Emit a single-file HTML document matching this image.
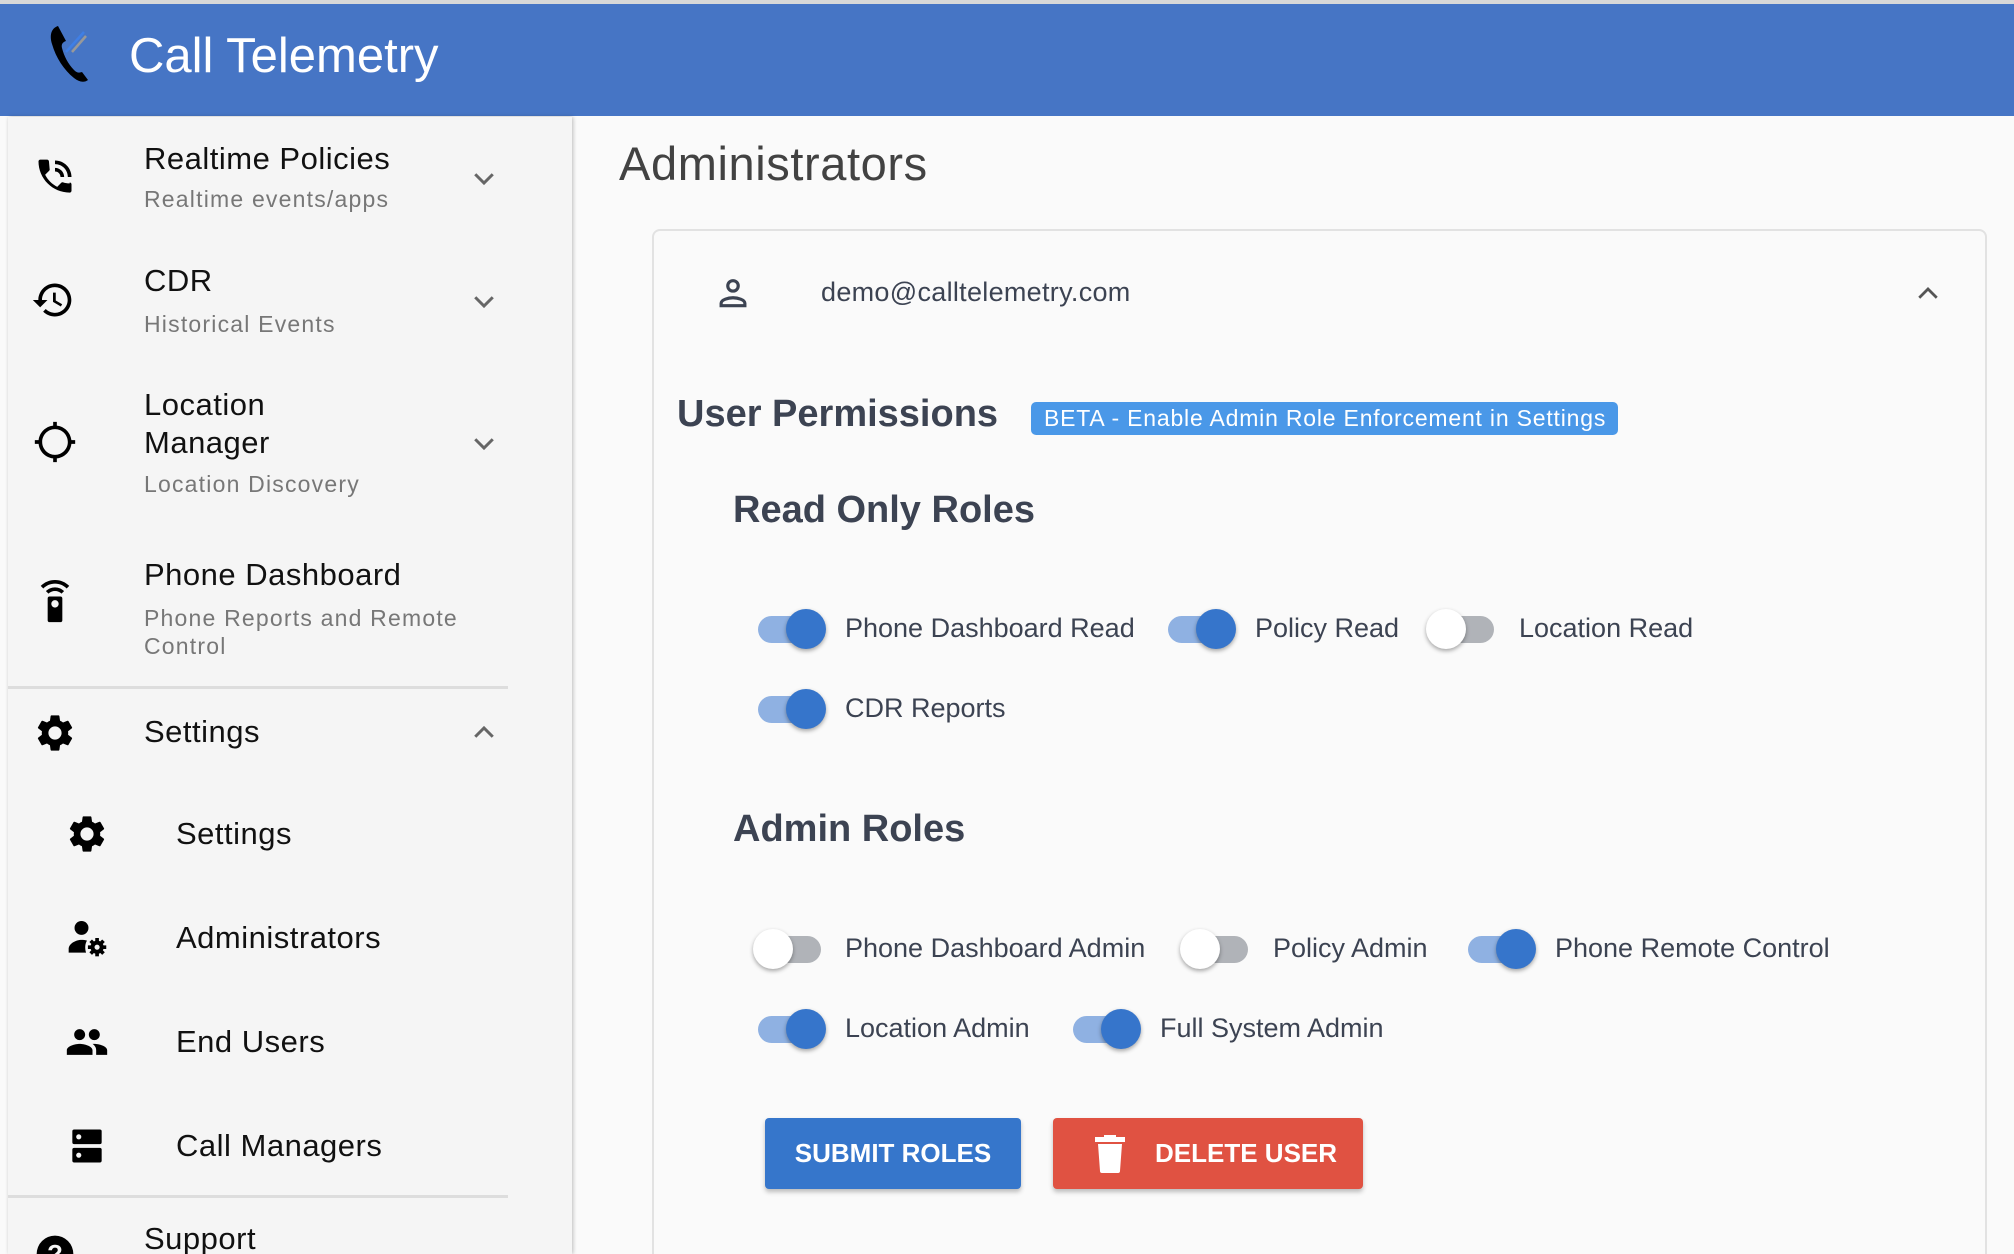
<!DOCTYPE html>
<html style="width:2014px;height:1254px;overflow:hidden"><head><meta charset="utf-8">
<style>
*{margin:0;padding:0;box-sizing:border-box}
body{width:2014px;height:1254px;overflow:hidden;background:#fafafa;font-family:"Liberation Sans",Arial,sans-serif;position:relative}
.abs{position:absolute}
.hdr{left:0;top:4px;width:2014px;height:112px;background:#4675c5}
.topline{left:0;top:0;width:2014px;height:4px;background:#d8d8d8}
.side{left:8px;top:117px;width:564px;height:1137px;background:#f5f5f5;box-shadow:1px 0 4px rgba(0,0,0,.25)}
.t{font-size:31px;color:#111;white-space:nowrap;letter-spacing:.5px}
.s{font-size:23px;color:#777;letter-spacing:1.2px;white-space:nowrap}
.ic{width:44px;height:44px}
.chev{width:30px;height:30px}
.div{left:8px;width:500px;height:3px;background:#ddd}
.card{left:652px;top:229px;width:1335px;height:1025px;border:2px solid #e2e2e2;border-bottom:none;border-radius:8px 8px 0 0;background:#fafafa}
.lbl{font-size:27px;color:#3c4352;white-space:nowrap}
.h{font-weight:bold;color:#3c4352;white-space:nowrap}
.tg{width:72px;height:44px}
.tg .tr{position:absolute;left:4px;top:9px;width:64px;height:27px;border-radius:14px;background:#b0b3b8}
.tg .kn{position:absolute;top:2px;left:0;width:40px;height:40px;border-radius:50%;background:#fff;box-shadow:0 2px 4px rgba(0,0,0,.35)}
.tg.on .tr{background:#8fb1e2}
.tg.on .kn{left:32px;background:#3675cb}
.btn{height:71px;border-radius:4px;color:#fff;font-size:26px;font-weight:bold;box-shadow:0 3px 5px rgba(0,0,0,.25);display:flex;align-items:center;justify-content:center}
</style></head><body>
<div class="abs topline"></div>
<div class="abs hdr"></div>
<svg class="abs" style="left:44px;top:22px" width="56" height="66" viewBox="0 0 56 66">
<path d="M14 4c-6 2-9 8-6 18 4 14 12 26 22 34 5 4 10 5 14 2l-6-8c-3 1-5 1-8-2-6-6-10-14-12-22-1-4 1-6 4-7z" fill="#000"/>
<line x1="22" y1="30" x2="40" y2="10" stroke="#3f7fe6" stroke-width="2.5"/>
<line x1="42" y1="14" x2="28" y2="30" stroke="#999" stroke-width="2.5"/>
</svg>
<div class="abs" style="left:129px;top:28px;font-size:49px;color:#fff;white-space:nowrap">Call Telemetry</div>

<div class="abs side"></div>
<svg class="abs ic" style="left:33px;top:155px" viewBox="0 0 24 24"><path d="M20 15.5c-1.25 0-2.45-.2-3.57-.57-.35-.11-.74-.03-1.02.24l-2.2 2.2c-2.830-1.44-5.15-3.75-6.59-6.59l2.2-2.21c.28-.26.36-.65.25-1L8.7 3.5c-.03-.55-.48-1-1.03-1H4c-.55 0-1 .45-1 1 0 9.39 7.61 17 17 17 .55 0 1-.45 1-1v-3.5c0-.55-.45-1-1-1zM19 12h2c0-4.97-4.03-9-9-9v2c3.87 0 7 3.13 7 7zm-4 0h2c0-2.76-2.24-5-5-5v2c1.66 0 3 1.34 3 3z"/></svg>
<div class="abs t" style="left:144px;top:141px">Realtime Policies</div>
<div class="abs s" style="left:144px;top:186px">Realtime events/apps</div>
<svg class="abs chev" style="left:469px;top:163px" viewBox="0 0 24 24"><path d="M5 9l7 7 7-7" fill="none" stroke="#666" stroke-width="2.4"/></svg>
<svg class="abs ic" style="left:31px;top:278px" viewBox="0 0 24 24"><path d="M13 3c-4.97 0-9 4.03-9 9H1l3.89 3.89.07.14L9 12H6c0-3.87 3.13-7 7-7s7 3.13 7 7-3.13 7-7 7c-1.93 0-3.68-.79-4.94-2.06l-1.42 1.42C8.27 19.99 10.51 21 13 21c4.97 0 9-4.03 9-9s-4.03-9-9-9zm-1 5v5l4.28 2.54.72-1.21-3.5-2.08V8H12z"/></svg>
<div class="abs t" style="left:144px;top:263px">CDR</div>
<div class="abs s" style="left:144px;top:311px">Historical Events</div>
<svg class="abs chev" style="left:469px;top:286px" viewBox="0 0 24 24"><path d="M5 9l7 7 7-7" fill="none" stroke="#666" stroke-width="2.4"/></svg>
<svg class="abs ic" style="left:33px;top:420px" viewBox="0 0 24 24"><path d="M20.94 11c-.46-4.17-3.77-7.48-7.94-7.94V1h-2v2.06C6.83 3.52 3.52 6.83 3.06 11H1v2h2.06c.46 4.17 3.77 7.48 7.94 7.94V23h2v-2.06c4.17-.46 7.48-3.77 7.94-7.94H23v-2h-2.06zM12 19c-3.87 0-7-3.13-7-7s3.13-7 7-7 7 3.13 7 7-3.13 7-7 7z"/></svg>
<div class="abs t" style="left:144px;top:387px">Location</div>
<div class="abs t" style="left:144px;top:425px">Manager</div>
<div class="abs s" style="left:144px;top:471px">Location Discovery</div>
<svg class="abs chev" style="left:469px;top:428px" viewBox="0 0 24 24"><path d="M5 9l7 7 7-7" fill="none" stroke="#666" stroke-width="2.4"/></svg>
<svg class="abs ic" style="left:33px;top:580px" viewBox="0 0 24 24"><path d="M15 9H9c-.55 0-1 .45-1 1v12c0 .55.45 1 1 1h6c.55 0 1-.45 1-1V10c0-.55-.45-1-1-1zm-3 6c-1.1 0-2-.9-2-2s.9-2 2-2 2 .9 2 2-.9 2-2 2zM7.05 6.05l1.41 1.41C9.37 6.56 10.62 6 12 6s2.63.56 3.54 1.46l1.41-1.41C15.68 4.78 13.93 4 12 4s-3.68.78-4.95 2.05zM12 0C8.96 0 6.21 1.23 4.22 3.22l1.41 1.41C7.26 3.01 9.51 2 12 2s4.74 1.01 6.36 2.64l1.41-1.41C17.79 1.23 15.04 0 12 0z"/></svg>
<div class="abs t" style="left:144px;top:557px">Phone Dashboard</div>
<div class="abs s" style="left:144px;top:605px">Phone Reports and Remote</div>
<div class="abs s" style="left:144px;top:633px">Control</div>
<div class="abs div" style="top:686px"></div>
<svg class="abs ic" style="left:33px;top:711px" viewBox="0 0 24 24"><path d="M19.14 12.94c.04-.3.06-.61.06-.94 0-.32-.02-.64-.07-.94l2.03-1.58c.18-.14.23-.41.12-.61l-1.92-3.32c-.12-.22-.37-.29-.59-.22l-2.39.96c-.5-.38-1.03-.7-1.62-.94l-.36-2.54c-.04-.24-.24-.41-.48-.41h-3.84c-.24 0-.43.17-.47.41l-.36 2.54c-.59.24-1.13.57-1.62.94l-2.39-.96c-.22-.08-.47 0-.59.22L2.74 8.87c-.12.21-.08.47.12.61l2.03 1.58c-.05.3-.09.63-.09.94s.02.64.07.94l-2.03 1.58c-.18.14-.23.41-.12.61l1.92 3.32c.12.22.37.29.59.22l2.39-.96c.5.38 1.03.7 1.62.94l.36 2.54c.05.24.24.41.48.41h3.84c.24 0 .44-.17.47-.41l.36-2.54c.59-.24 1.13-.56 1.62-.94l2.39.96c.22.08.47 0 .59-.22l1.92-3.32c.12-.22.07-.47-.12-.61l-2.01-1.58zM12 15.6c-1.98 0-3.6-1.62-3.6-3.6s1.62-3.6 3.6-3.6 3.6 1.62 3.6 3.6-1.62 3.6-3.6 3.6z"/></svg>
<div class="abs t" style="left:144px;top:714px">Settings</div>
<svg class="abs chev" style="left:469px;top:718px" viewBox="0 0 24 24"><path d="M5 15l7-7 7 7" fill="none" stroke="#666" stroke-width="2.4"/></svg>
<svg class="abs ic" style="left:65px;top:812px" viewBox="0 0 24 24"><path d="M19.14 12.94c.04-.3.06-.61.06-.94 0-.32-.02-.64-.07-.94l2.03-1.58c.18-.14.23-.41.12-.61l-1.92-3.32c-.12-.22-.37-.29-.59-.22l-2.39.96c-.5-.38-1.03-.7-1.62-.94l-.36-2.54c-.04-.24-.24-.41-.48-.41h-3.84c-.24 0-.43.17-.47.41l-.36 2.54c-.59.24-1.13.57-1.62.94l-2.39-.96c-.22-.08-.47 0-.59.22L2.74 8.87c-.12.21-.08.47.12.61l2.03 1.58c-.05.3-.09.63-.09.94s.02.64.07.94l-2.03 1.58c-.18.14-.23.41-.12.61l1.92 3.32c.12.22.37.29.59.22l2.39-.96c.5.38 1.03.7 1.62.94l.36 2.54c.05.24.24.41.48.41h3.84c.24 0 .44-.17.47-.41l.36-2.54c.59-.24 1.13-.56 1.62-.94l2.39.96c.22.08.47 0 .59-.22l1.92-3.32c.12-.22.07-.47-.12-.61l-2.01-1.58zM12 15.6c-1.98 0-3.6-1.62-3.6-3.6s1.62-3.6 3.6-3.6 3.6 1.62 3.6 3.6-1.62 3.6-3.6 3.6z"/></svg>
<div class="abs t" style="left:176px;top:816px">Settings</div>
<svg class="abs ic" style="left:65px;top:916px" viewBox="0 0 24 24"><circle cx="9" cy="6.5" r="3.8"/><path d="M2 20v-2c0-3 4-5 7-5 1 0 2 .1 3 .4-1 1.5-1.3 4-.5 6.6z"/><g transform="translate(17.5,17)"><circle r="3.6"/><g stroke="#000" stroke-width="2"><line x1="0" y1="-5" x2="0" y2="5"/><line x1="-5" y1="0" x2="5" y2="0"/><line x1="-3.5" y1="-3.5" x2="3.5" y2="3.5"/><line x1="-3.5" y1="3.5" x2="3.5" y2="-3.5"/></g><circle r="1.4" fill="#f5f5f5"/></g></svg>
<div class="abs t" style="left:176px;top:920px">Administrators</div>
<svg class="abs ic" style="left:65px;top:1020px" viewBox="0 0 24 24"><path d="M16 11c1.66 0 2.99-1.34 2.99-3S17.66 5 16 5c-1.66 0-3 1.34-3 3s1.34 3 3 3zm-8 0c1.66 0 2.99-1.34 2.99-3S9.66 5 8 5C6.34 5 5 6.34 5 8s1.34 3 3 3zm0 2c-2.33 0-7 1.17-7 3.5V19h14v-2.5c0-2.33-4.67-3.5-7-3.5zm8 0c-.29 0-.62.02-.97.05 1.16.84 1.97 1.97 1.97 3.45V19h6v-2.5c0-2.33-4.67-3.5-7-3.5z"/></svg>
<div class="abs t" style="left:176px;top:1024px">End Users</div>
<svg class="abs ic" style="left:65px;top:1124px" viewBox="0 0 24 24"><rect x="4" y="3" width="16" height="8" rx="1"/><rect x="4" y="13" width="16" height="8" rx="1"/><circle cx="7.5" cy="7" r="1.4" fill="#f5f5f5"/><circle cx="7.5" cy="17" r="1.4" fill="#f5f5f5"/></svg>
<div class="abs t" style="left:176px;top:1128px">Call Managers</div>
<div class="abs div" style="top:1195px"></div>
<svg class="abs ic" style="left:33px;top:1232px" viewBox="0 0 24 24"><circle cx="12" cy="12" r="10"/><text x="12" y="17" font-size="14" fill="#f5f5f5" text-anchor="middle" font-weight="bold">?</text></svg>
<div class="abs t" style="left:144px;top:1221px">Support</div>

<div class="abs" style="left:619px;top:136px;font-size:47px;letter-spacing:.6px;color:#424242;white-space:nowrap">Administrators</div>
<div class="abs card"></div>
<svg class="abs" style="left:714px;top:274px" width="38" height="38" viewBox="0 0 24 24"><circle cx="12" cy="7.5" r="3.3" fill="none" stroke="#3c4352" stroke-width="2"/><path d="M4.5 20v-1.5c0-2.2 4.5-3.5 7.5-3.5s7.5 1.3 7.5 3.5V20z" fill="none" stroke="#3c4352" stroke-width="2"/></svg>
<div class="abs lbl" style="left:821px;top:277px;letter-spacing:.3px">demo@calltelemetry.com</div>
<svg class="abs chev" style="left:1913px;top:279px" viewBox="0 0 24 24"><path d="M5 15l7-7 7 7" fill="none" stroke="#555" stroke-width="2.2"/></svg>

<div class="abs h" style="left:677px;top:393px;font-size:38px">User Permissions</div>
<div class="abs" style="left:1031px;top:402px;width:587px;height:33px;background:#4a98e8;border-radius:5px;color:#fff;font-size:23px;line-height:33px;padding-left:13px;letter-spacing:.8px;white-space:nowrap;overflow:hidden">BETA - Enable Admin Role Enforcement in Settings</div>
<div class="abs h" style="left:733px;top:489px;font-size:38px">Read Only Roles</div>

<div class="abs tg on" style="left:754px;top:607px"><div class="tr"></div><div class="kn"></div></div>
<div class="abs lbl" style="left:845px;top:613px">Phone Dashboard Read</div>
<div class="abs tg on" style="left:1164px;top:607px"><div class="tr"></div><div class="kn"></div></div>
<div class="abs lbl" style="left:1255px;top:613px">Policy Read</div>
<div class="abs tg" style="left:1426px;top:607px"><div class="tr"></div><div class="kn"></div></div>
<div class="abs lbl" style="left:1519px;top:613px">Location Read</div>
<div class="abs tg on" style="left:754px;top:687px"><div class="tr"></div><div class="kn"></div></div>
<div class="abs lbl" style="left:845px;top:693px">CDR Reports</div>

<div class="abs h" style="left:733px;top:808px;font-size:38px">Admin Roles</div>

<div class="abs tg" style="left:753px;top:927px"><div class="tr"></div><div class="kn"></div></div>
<div class="abs lbl" style="left:845px;top:933px">Phone Dashboard Admin</div>
<div class="abs tg" style="left:1180px;top:927px"><div class="tr"></div><div class="kn"></div></div>
<div class="abs lbl" style="left:1273px;top:933px">Policy Admin</div>
<div class="abs tg on" style="left:1464px;top:927px"><div class="tr"></div><div class="kn"></div></div>
<div class="abs lbl" style="left:1555px;top:933px">Phone Remote Control</div>
<div class="abs tg on" style="left:754px;top:1007px"><div class="tr"></div><div class="kn"></div></div>
<div class="abs lbl" style="left:845px;top:1013px">Location Admin</div>
<div class="abs tg on" style="left:1069px;top:1007px"><div class="tr"></div><div class="kn"></div></div>
<div class="abs lbl" style="left:1160px;top:1013px">Full System Admin</div>

<div class="abs btn" style="left:765px;top:1118px;width:256px;background:#3676cb">SUBMIT ROLES</div>
<div class="abs btn" style="left:1053px;top:1118px;width:310px;background:#e05242;justify-content:flex-start">
<svg style="margin-left:42px" width="30" height="38" viewBox="0 0 30 38"><path d="M3 9h24l-2 27a2 2 0 0 1-2 2H7a2 2 0 0 1-2-2z" fill="#fff"/><rect x="0" y="2" width="30" height="5" fill="#fff"/><rect x="9" y="0" width="12" height="4" fill="#fff"/></svg>
<span style="margin-left:30px">DELETE USER</span></div>
</body></html>
